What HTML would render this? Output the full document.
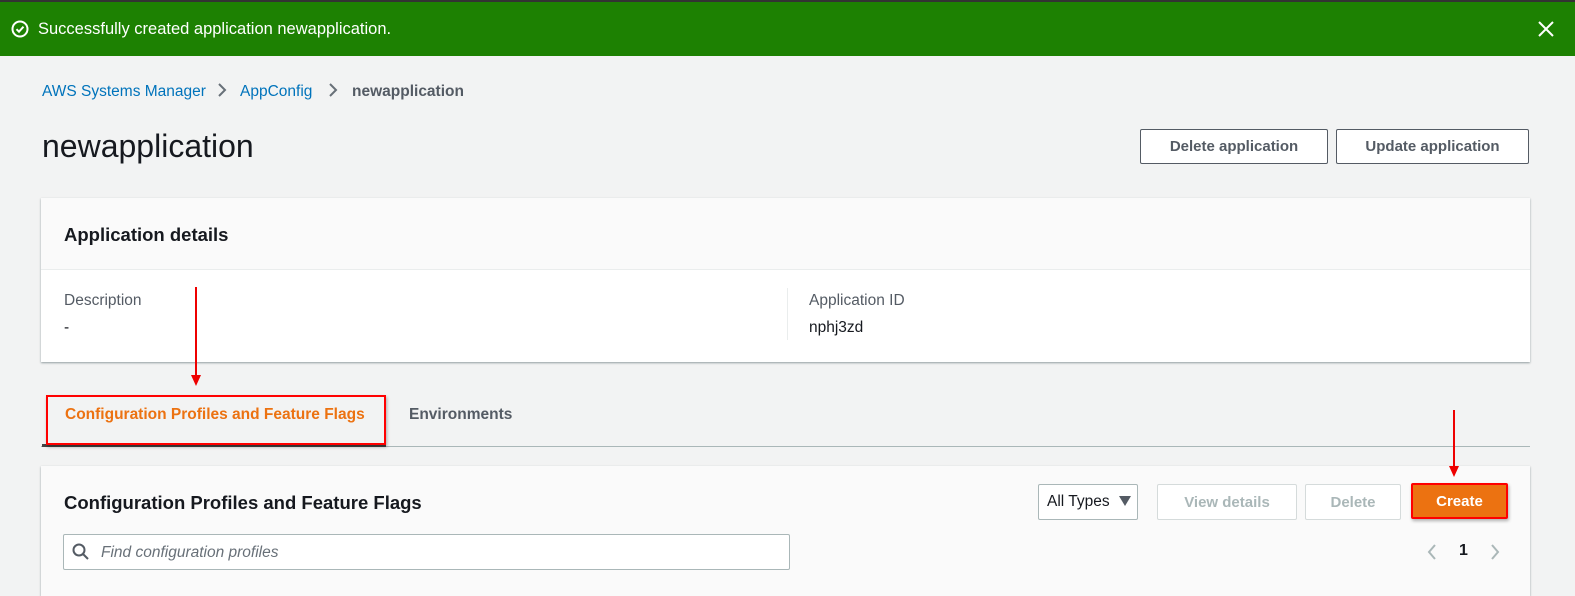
<!DOCTYPE html>
<html><head><style>
*{margin:0;padding:0;box-sizing:border-box}
body{width:1575px;height:589px;overflow:hidden;background:#f2f3f3;font-family:"Liberation Sans",sans-serif;position:relative;color:#16191f}
.a{position:absolute}
.btn{position:absolute;border:1px solid #545b64;background:#fff;font-weight:bold;font-size:15px;color:#545b64;display:flex;align-items:center;justify-content:center;border-radius:2px}
.dis{border-color:#d5dbdb;color:#aab7b8}
</style></head><body>
<div class="a" style="left:0;top:0;width:1575px;height:2px;background:#333"></div>
<div class="a" style="left:0;top:2px;width:1575px;height:54px;background:#1d8102"></div>
<svg class="a" style="left:10px;top:19px" width="20" height="20" viewBox="0 0 20 20"><circle cx="10" cy="10" r="7.5" fill="none" stroke="#fff" stroke-width="2"/><path d="M6.5 10.2l2.5 2.5 4.5-5" fill="none" stroke="#fff" stroke-width="2"/></svg>
<div class="a" style="left:38px;top:20px;font-size:16.5px;color:#fff">Successfully created application newapplication.</div>
<svg class="a" style="left:1538px;top:21px" width="16" height="16"><path d="M1 1L15 15M15 1L1 15" stroke="#fff" stroke-width="2"/></svg>
<div class="a" style="left:42px;top:83px;font-size:15.5px;color:#0073bb">AWS Systems Manager</div>
<svg class="a" style="left:216px;top:82px" width="12" height="16"><path d="M3 2l6 6-6 6" fill="none" stroke="#687078" stroke-width="2"/></svg>
<div class="a" style="left:240px;top:83px;font-size:15.5px;color:#0073bb">AppConfig</div>
<svg class="a" style="left:327px;top:82px" width="12" height="16"><path d="M3 2l6 6-6 6" fill="none" stroke="#687078" stroke-width="2"/></svg>
<div class="a" style="left:352px;top:83px;font-size:15.5px;color:#545b64;font-weight:bold">newapplication</div>
<div class="a" style="left:42px;top:128px;font-size:32px;color:#16191f">newapplication</div>
<div class="btn" style="left:1140px;top:129px;width:188px;height:35px">Delete application</div>
<div class="btn" style="left:1336px;top:129px;width:193px;height:35px">Update application</div>
<div class="a" style="left:41px;top:198px;width:1489px;height:164px;background:#fff;box-shadow:0 1px 2px rgba(0,28,36,.4)"></div>
<div class="a" style="left:41px;top:198px;width:1489px;height:72px;background:#fafafa;border-bottom:1px solid #eaeded"></div>
<div class="a" style="left:64px;top:224px;font-size:18.5px;font-weight:bold">Application details</div>
<div class="a" style="left:64px;top:292px;font-size:15.5px;color:#545b64">Description</div>
<div class="a" style="left:64px;top:319px;font-size:15.5px">-</div>
<div class="a" style="left:787px;top:288px;width:1px;height:52px;background:#eaeded"></div>
<div class="a" style="left:809px;top:292px;font-size:15.5px;color:#545b64">Application ID</div>
<div class="a" style="left:809px;top:319px;font-size:15.5px">nphj3zd</div>
<div class="a" style="left:41px;top:446px;width:1489px;height:1px;background:#aab7b8"></div>
<div class="a" style="left:42px;top:444px;width:344px;height:3px;background:#444"></div>
<div class="a" style="left:65px;top:406px;font-size:15.5px;font-weight:bold;color:#ec7211">Configuration Profiles and Feature Flags</div>
<div class="a" style="left:409px;top:406px;font-size:15.5px;font-weight:bold;color:#545b64">Environments</div>
<div class="a" style="left:46px;top:395px;width:340px;height:50px;border:2px solid #f00;box-shadow:1px 2px 3px rgba(0,0,0,.3)"></div>
<div class="a" style="left:195px;top:287px;width:1.5px;height:92px;background:#e00"></div>
<svg class="a" style="left:189px;top:375px" width="14" height="12"><path d="M2 0L7 11L12 0z" fill="#e00"/></svg>
<div class="a" style="left:41px;top:466px;width:1489px;height:130px;background:#fafafa;box-shadow:0 1px 2px rgba(0,28,36,.4)"></div>
<div class="a" style="left:1453px;top:410px;width:1.5px;height:62px;background:#e00"></div>
<svg class="a" style="left:1447px;top:466px" width="14" height="12"><path d="M2 0L7 11L12 0z" fill="#e00"/></svg>
<div class="a" style="left:64px;top:492px;font-size:18.5px;font-weight:bold">Configuration Profiles and Feature Flags</div>
<div class="a" style="left:1038px;top:484px;width:100px;height:36px;border:1px solid #aab7b8;background:#fff;border-radius:2px"></div>
<div class="a" style="left:1047px;top:493px;font-size:15.5px">All Types</div>
<svg class="a" style="left:1118px;top:495px" width="14" height="12"><path d="M1 1h12L7 11z" fill="#545b64"/></svg>
<div class="btn dis" style="left:1157px;top:484px;width:140px;height:36px">View details</div>
<div class="btn dis" style="left:1305px;top:484px;width:96px;height:36px">Delete</div>
<div class="btn" style="left:1411px;top:483px;width:97px;height:36px;background:#ec7211;border:2px solid #f00;color:#fff;box-shadow:1px 2px 3px rgba(0,0,0,.3)">Create</div>
<div class="a" style="left:63px;top:534px;width:727px;height:36px;border:1px solid #aab7b8;background:#fff;border-radius:2px"></div>
<svg class="a" style="left:71px;top:542px" width="20" height="20"><circle cx="8" cy="8" r="5.5" fill="none" stroke="#545b64" stroke-width="2"/><path d="M12 12l5 5" stroke="#545b64" stroke-width="2"/></svg>
<div class="a" style="left:101px;top:544px;font-size:15.5px;font-style:italic;color:#687078">Find configuration profiles</div>
<svg class="a" style="left:1426px;top:543px" width="12" height="18"><path d="M9 2L3 9l6 7" fill="none" stroke="#aab7b8" stroke-width="2"/></svg>
<div class="a" style="left:1459px;top:542px;font-size:16px;font-weight:bold">1</div>
<svg class="a" style="left:1489px;top:543px" width="12" height="18"><path d="M3 2l6 7-6 7" fill="none" stroke="#aab7b8" stroke-width="2"/></svg>
</body></html>
